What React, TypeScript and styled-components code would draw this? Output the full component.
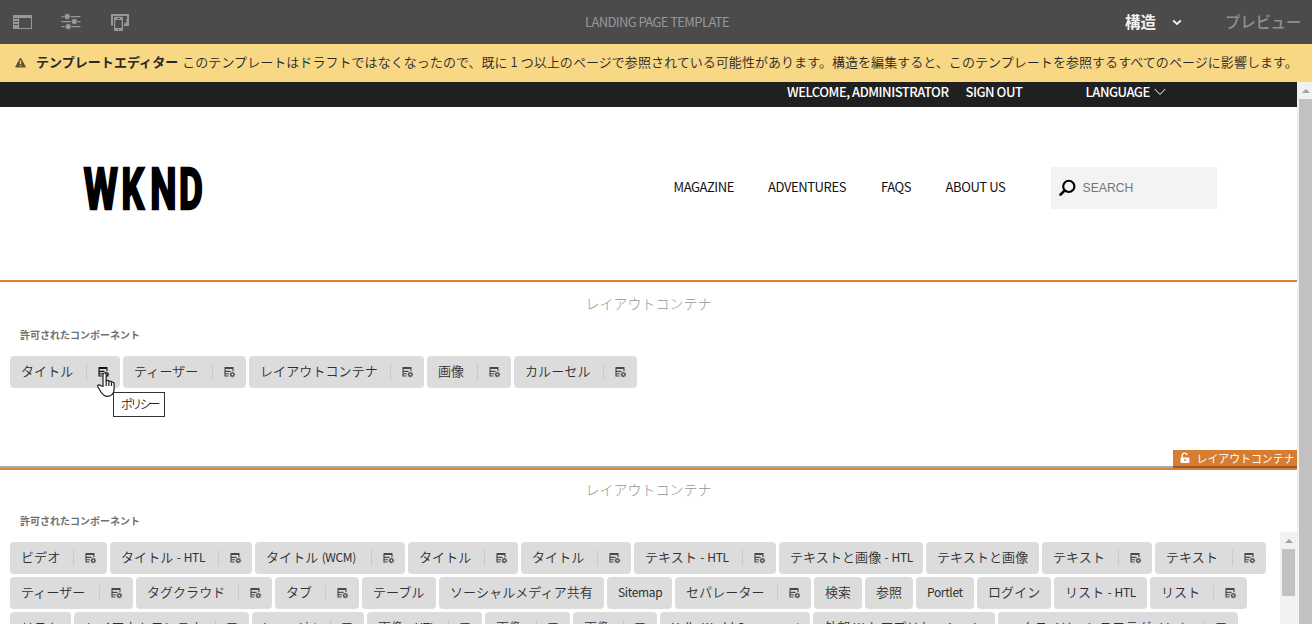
import React from "react";
import styled, { createGlobalStyle } from "styled-components";

const Global = createGlobalStyle`
  * { box-sizing: border-box; }
  html, body { margin: 0; padding: 0; overflow: hidden; }
  body {
    width: 1312px;
    height: 624px;
    background: #fff;
    font-family: "Noto Sans CJK JP", "Noto Sans", sans-serif;
    color: #323232;
    white-space: nowrap;
  }
`;

const Page = styled.div`
  width: 1312px;
  height: 624px;
  display: flex;
  flex-direction: column;
  overflow: hidden;
`;

const Toolbar = styled.header`
  height: 44px;
  flex: none;
  background: #4b4b4b;
  display: grid;
  grid-template-columns: 585px 1fr 187px;
  align-items: center;
`;

const Tools = styled.div`
  display: flex;
  gap: 29px;
  padding-left: 12px;
  color: #989898;
  svg { display: block; }
`;

const PageName = styled.div`
  font-size: 13px;
  line-height: 20px;
  letter-spacing: -0.62px;
  color: #989898;
`;

const Modes = styled.div`
  display: flex;
  align-items: center;
  font-size: 15.5px;
  font-weight: 700;
  line-height: 22px;
  padding-bottom: 3px;
  color: #f2f2f2;
  svg { margin: 4px 43px 0 16px; }
`;

const Preview = styled.span`
  color: #909090;
  font-weight: 500;
  letter-spacing: -0.3px;
`;

const Banner = styled.div`
  height: 38px;
  flex: none;
  background: #f8d785;
  display: flex;
  align-items: center;
  padding: 0 0 3px 15px;
  font-size: 13px;
  font-weight: 350;
  letter-spacing: 0.05px;
  color: #282828;
  svg { margin: 2px 10px 0 0; flex: none; }
  b { font-weight: 700; margin-right: 4px; }
`;

const Frame = styled.div`
  flex: 1;
  min-height: 0;
  display: flex;
`;

const Site = styled.main`
  width: 1297px;
  display: flex;
  flex-direction: column;
  overflow: hidden;
`;

const AccountBar = styled.div`
  height: 25px;
  flex: none;
  background: #202020;
  color: #fff;
  display: flex;
  align-items: flex-start;
  padding-left: 787px;
  font-size: 13px;
  font-weight: 500;
  line-height: 20px;
  letter-spacing: -0.48px;
`;

const AccountItem = styled.span<{ $w: number }>`
  width: ${(p) => p.$w}px;
  display: flex;
  align-items: center;
  gap: 4.5px;
`;

const SiteHeader = styled.div`
  height: 173px;
  flex: none;
  display: flex;
  align-items: flex-start;
  padding: 60px 80px 0 80px;
`;

const LogoMark = styled.svg`
  overflow: visible;
  flex: none;
`;

const Nav = styled.nav`
  display: flex;
  margin-left: auto;
  margin-right: 44.5px;
  font-size: 13px;
  line-height: 40px;
  letter-spacing: -0.4px;
  color: #111;
`;

const NavItem = styled.a<{ $w: number }>`
  width: ${(p) => p.$w}px;
`;

const Search = styled.div`
  width: 166px;
  height: 42px;
  background: #f3f3f3;
  display: flex;
  align-items: center;
  gap: 6.5px;
  padding-left: 8px;
  font: 12.2px "Liberation Sans", sans-serif;
  color: #757575;
`;

const Container = styled.section<{ $h: number }>`
  height: ${(p) => p.$h}px;
  flex: none;
  display: flex;
  flex-direction: column;
  position: relative;
`;

const Rule = styled.div<{ $double?: boolean }>`
  height: ${(p) => (p.$double ? 4 : 2)}px;
  flex: none;
  background: #d8823c;
  border-top: ${(p) => (p.$double ? "2px solid #aaaaaa" : "none")};
`;

const Placeholder = styled.div<{ $h: number; $line: number }>`
  height: ${(p) => p.$h}px;
  flex: none;
  line-height: ${(p) => p.$line}px;
  text-align: center;
  font-size: 14px;
  font-weight: 300;
  color: #959595;
`;

const Caption = styled.div`
  height: 20px;
  flex: none;
  line-height: 22px;
  padding-left: 20px;
  font-size: 10px;
  font-weight: 700;
  color: #707070;
`;

const Chips = styled.div`
  display: flex;
  flex-direction: column;
  gap: 3px;
  padding: 12px 0 0 10px;
`;

const ChipRow = styled.div`
  display: flex;
  gap: 3px;
`;

const Chip = styled.div<{ $w: number }>`
  width: ${(p) => p.$w}px;
  height: 32px;
  flex: none;
  border-radius: 4px;
  background: #dcdcdc;
  display: flex;
  align-items: center;
  padding: 0 10px 0 11px;
  font-size: 13px;
  font-weight: 350;
  line-height: 30px;
  color: #303030;
`;

const ChipLabel = styled.span`
  flex: 1;
  height: 32px;
  letter-spacing: 0.1px;
`;

const Latin = styled.span`
  font-size: 12px;
  font-weight: 400;
  letter-spacing: -0.35px;
  word-spacing: 0.9px;
`;

const Policy = styled.span<{ $active?: boolean }>`
  height: 16px;
  width: 24px;
  border-left: 1px solid #c9c9c9;
  display: flex;
  align-items: center;
  justify-content: flex-end;
  color: ${(p) => (p.$active ? "#111" : "#484848")};
`;

const Tooltip = styled.div`
  position: absolute;
  left: 113px;
  top: 112px;
  width: 52px;
  height: 25px;
  border: 1px solid #333;
  background: #fff;
  line-height: 22px;
  padding-left: 7px;
  font-size: 12px;
  font-weight: 350;
  letter-spacing: -2.8px;
  color: #222;
`;

const Cursor = styled.svg`
  position: absolute;
  left: 96px;
  top: 92px;
`;

const Badge = styled.div`
  position: absolute;
  right: 0;
  top: 170px;
  z-index: 1;
  width: 124px;
  height: 18px;
  background: #d67d31;
  border-bottom: 2px solid #995622;
  display: flex;
  align-items: center;
  padding-left: 7px;
  gap: 6.5px;
  color: #fff;
  font-size: 10.9px;
  line-height: 16px;
`;

const Scrollbar = styled.div<{ $w: number; $thumb?: number }>`
  width: ${(p) => p.$w}px;
  flex: none;
  background: #f1f1f1;
  display: flex;
  flex-direction: column;
  align-items: center;
  padding-left: ${(p) => (p.$w === 15 ? 2 : 0)}px;
  &::before {
    content: "";
    border: 4px solid transparent;
    border-top-width: 0;
    border-bottom: 4px solid #a0a0a0;
    margin: 7px 0 6px;
  }
  &::after {
    content: "";
    width: 13px;
    height: ${(p) => (p.$thumb ? p.$thumb + "px" : "auto")};
    flex: ${(p) => (p.$thumb ? "none" : 1)};
    background: #c1c1c1;
  }
`;

const InnerScroll = styled.div`
  position: absolute;
  right: 0;
  top: 66px;
  height: 92px;
  display: flex;
`;

const PolicyIcon = () => (
  <svg width="12" height="12" viewBox="0 0 12 12" fill="none" stroke="currentColor">
    <path d="M.5 1h9v2h-9z" fill="currentColor" stroke="none" />
    <path d="M1 3v7.2M9 3v2M1 5.4h5.5M1 7.7h4M.5 10h4" strokeWidth="1.15" />
    <circle cx="8.4" cy="8.5" r="1.7" strokeWidth="1.3" />
    <path d="M8.4 5.7v1M8.4 10.3v1M5.6 8.5h1M10.2 8.5h1M6.5 6.6l.6.6M9.7 9.8l.6.6M10.3 6.6l-.6.6M7.1 9.8l-.6.6" strokeWidth=".8" />
  </svg>
);

type Item = [string, number, boolean];

const allowedTop: Item[] = [
  ["タイトル", 110, true],
  ["ティーザー", 123, true],
  ["レイアウトコンテナ", 175, true],
  ["画像", 84, true],
  ["カルーセル", 123, true],
];

const allowedBottom: Item[][] = [
  [
    ["ビデオ", 97, true],
    ["タイトル - HTL", 142, true],
    ["タイトル (WCM)", 150, true],
    ["タイトル", 110, true],
    ["タイトル", 110, true],
    ["テキスト - HTL", 142, true],
    ["テキストと画像 - HTL", 144, false],
    ["テキストと画像", 113, false],
    ["テキスト", 110, true],
    ["テキスト", 111, true],
  ],
  [
    ["ティーザー", 123, true],
    ["タグクラウド", 136, true],
    ["タブ", 84, true],
    ["テーブル", 74, false],
    ["ソーシャルメディア共有", 165, false],
    ["Sitemap", 65, false],
    ["セパレーター", 136, true],
    ["検索", 48, false],
    ["参照", 48, false],
    ["Portlet", 58, false],
    ["ログイン", 74, false],
    ["リスト - HTL", 93, false],
    ["リスト", 97, true],
  ],
  [
    ["リスト", 61, false],
    ["レイアウトコンテナ", 175, true],
    ["Image List", 112, true],
    ["画像 - HTL", 115, true],
    ["画像", 85, true],
    ["画像", 84, true],
    ["Hello World Component", 150, false],
    ["外部 Web アプリケーション", 182, false],
    ["エクスペリエンスフラグメント", 240, true],
  ],
];

const MixedText = ({ text }: { text: string }) => (
  <>
    {text
      .split(/([ -~]+)/)
      .filter(Boolean)
      .map((part, i) => (/^[ -~]/.test(part) ? <Latin key={i}>{part}</Latin> : part))}
  </>
);

const Row = ({ items, active }: { items: Item[]; active?: boolean }) => (
  <ChipRow>
    {items.map(([label, width, policy], i) => (
      <Chip key={i} $w={width}>
        <ChipLabel>
          <MixedText text={label} />
        </ChipLabel>
        {policy && (
          <Policy $active={active && i === 0}>
            <PolicyIcon />
          </Policy>
        )}
      </Chip>
    ))}
  </ChipRow>
);

const ToolIcons = () => (
  <Tools>
    <svg width="20" height="20" viewBox="0 0 20 20">
      <path fillRule="evenodd" fill="currentColor" d="M1 3h19v14H1zM7 6v10h12V6zM2 6v1h4V6zM2 9v1h4V9zM2 12v1h4v-1z" />
    </svg>
    <svg width="20" height="20" viewBox="0 0 20 20" fill="currentColor">
      <path d="M.5 4h19v1.2H.5zM.5 9h19v1.2H.5zM.5 14h19v1.2H.5z" />
      <g stroke="#4b4b4b" strokeWidth="1">
        <circle cx="6.2" cy="4.5" r="3.2" />
        <circle cx="13.3" cy="9.5" r="3.2" />
        <circle cx="7.2" cy="14.6" r="3.2" />
      </g>
    </svg>
    <svg width="20" height="20" viewBox="0 0 20 20">
      <path d="M1 2h18v5h-2V4H3v9.5H1zM14 11.5h1.5V10h1.5V9h2v5h-5z" fill="currentColor" />
      <path d="M17 4h2v6h-2z" fill="currentColor" />
      <path d="M16 7.5h1.5v1.6H16z" fill="currentColor" />
      <path fillRule="evenodd" d="M5 4.7h7a1 1 0 0 1 1 1V18a1 1 0 0 1-1 1H5a1 1 0 0 1-1-1V5.7a1 1 0 0 1 1-1zM5.3 8v8h6.4V8zM7 6v.9h3V6zM8 17v1h1v-1z" fill="currentColor" />
    </svg>
  </Tools>
);

const logoLetters = [
  { c: "W", x: 3.7, s: 0.67 },
  { c: "K", x: 41.4, s: 0.61 },
  { c: "N", x: 70.2, s: 0.64 },
  { c: "D", x: 98.9, s: 0.63 },
];

const Logo = () => (
  <LogoMark width="130" height="50" viewBox="0 0 130 50" fill="#000" stroke="#000" strokeWidth="2.6">
    {logoLetters.map((l) => (
      <text key={l.c} transform={`translate(${l.x} 42) scale(${l.s} 1)`} fontFamily="Roboto" fontWeight="700" fontSize="58">
        {l.c}
      </text>
    ))}
  </LogoMark>
);

export default function App() {
  return (
    <>
      <Global />
      <Page>
        <Toolbar>
          <ToolIcons />
          <PageName>LANDING PAGE TEMPLATE</PageName>
          <Modes>
            構造
            <svg width="10" height="8" viewBox="0 0 10 8" fill="none" stroke="currentColor" strokeWidth="1.8">
              <path d="M1.2 1.5L5 5l3.8-3.5" />
            </svg>
            <Preview>プレビュー</Preview>
          </Modes>
        </Toolbar>
        <Banner>
          <svg width="11" height="11" viewBox="0 0 11 11">
            <path d="M5.5 1L10.4 10H.6z" fill="#65562f" stroke="#65562f" strokeLinejoin="round" />
            <path d="M5.5 3.5v3.4M5.5 8v1.3" stroke="#f8d785" strokeWidth="1.2" />
          </svg>
          <b>テンプレートエディター</b>
          <span>このテンプレートはドラフトではなくなったので、既に 1 つ以上のページで参照されている可能性があります。構造を編集すると、このテンプレートを参照するすべてのページに影響します。</span>
        </Banner>
        <Frame>
          <Site>
            <AccountBar>
              <AccountItem $w={178.5}>WELCOME, ADMINISTRATOR</AccountItem>
              <AccountItem $w={120}>SIGN OUT</AccountItem>
              <AccountItem $w={90}>
                LANGUAGE
                <svg width="12" height="8" viewBox="0 0 12 8" fill="none" stroke="#fff" strokeWidth="1">
                  <path d="M.8 1L6 6.5 11.2 1" />
                </svg>
              </AccountItem>
            </AccountBar>
            <SiteHeader>
              <Logo />
              <Nav>
                <NavItem $w={94.5}>MAGAZINE</NavItem>
                <NavItem $w={113}>ADVENTURES</NavItem>
                <NavItem $w={64.5}>FAQS</NavItem>
                <NavItem $w={61}>ABOUT US</NavItem>
              </Nav>
              <Search>
                <svg width="17" height="18" viewBox="0 0 17 18" fill="none" stroke="#000">
                  <circle cx="9.8" cy="7.4" r="5.6" strokeWidth="2.1" />
                  <path d="M5.6 11.6L1.5 15.7" strokeWidth="2.6" strokeLinecap="round" />
                </svg>
                SEARCH
              </Search>
            </SiteHeader>
            <Container $h={186}>
              <Rule />
              <Placeholder $h={42} $line={42}>レイアウトコンテナ</Placeholder>
              <Caption>許可されたコンポーネント</Caption>
              <Chips>
                <Row items={allowedTop} active />
              </Chips>
              <Tooltip>ポリシー</Tooltip>
              <Cursor width="20" height="26" viewBox="0 0 20 26" fill="#fff" stroke="#1c1c28" strokeWidth="1.2" strokeLinejoin="round">
                <path d="M7 14.5V2.8C7 .4 10.2.4 10.2 2.8V9c.8-1 2.5-.8 2.7.5 1-.8 2.3-.4 2.6.7 1.3-.5 2.6.2 2.6 1.7v5.6c0 4-2.8 6.9-6.5 6.9-3.2 0-5-1.7-6.6-4.4L2 15.3c-1.2-2 1-3.2 2.4-1.8z" />
                <path d="M10.2 8.8V14M12.9 9.5V14M15.5 10.2V14" fill="none" />
              </Cursor>
              <Badge>
                <svg width="10" height="12" viewBox="0 0 10 12" fill="none" stroke="#fff">
                  <path d="M2.2 6V3.3C2.2.5 7 .5 7 3.3" strokeWidth="1.3" />
                  <path d="M.6 5.5h8.8V11H.6z" fill="#fff" stroke="none" />
                  <path d="M5 7v2" stroke="#d67d31" strokeWidth="1.4" />
                </svg>
                レイアウトコンテナ
              </Badge>
            </Container>
            <Container $h={158}>
              <Rule $double />
              <Placeholder $h={40} $line={38}>レイアウトコンテナ</Placeholder>
              <Caption>許可されたコンポーネント</Caption>
              <Chips>
                {allowedBottom.map((items, i) => (
                  <Row key={i} items={items} />
                ))}
              </Chips>
              <InnerScroll>
                <Scrollbar $w={17} $thumb={47} />
              </InnerScroll>
            </Container>
          </Site>
          <Scrollbar $w={15} />
        </Frame>
      </Page>
    </>
  );
}
